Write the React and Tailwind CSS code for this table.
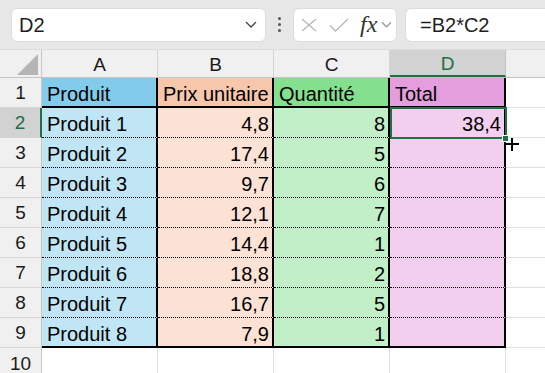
import React from 'react'

const data = [
  ['Produit 1', '4,8', '8', '38,4'],
  ['Produit 2', '17,4', '5', ''],
  ['Produit 3', '9,7', '6', ''],
  ['Produit 4', '12,1', '7', ''],
  ['Produit 5', '14,4', '1', ''],
  ['Produit 6', '18,8', '2', ''],
  ['Produit 7', '16,7', '5', ''],
  ['Produit 8', '7,9', '1', ''],
]

const heads = ['Produit', 'Prix unitaire', 'Quantité', 'Total']
const headBg = ['bg-[#83cbeb]', 'bg-[#f7c7ac]', 'bg-[#84e08e]', 'bg-[#e49edd]']
const cellBg = ['bg-[#c0e6f5]', 'bg-[#fbe2d5]', 'bg-[#c1f0c8]', 'bg-[#f2cfee]']

function Chevron({ className }) {
  return (
    <svg className={className} width="12" height="7" viewBox="0 0 12 7" fill="none">
      <path d="M1 1l5 5 5-5" stroke="currentColor" strokeWidth="1.3" />
    </svg>
  )
}

function RowHead({ n, active }) {
  return (
    <div className={`w-[42px] shrink-0 h-[30px] flex items-center justify-center pt-[2px] text-[19px] border-b border-[#d6d6d6] ${active ? 'bg-[#d2d2d2] text-[#1e6e42] border-r-2 border-r-[#1e7145]' : 'bg-[#f0f0f0] text-[#1a1a1a] border-r border-r-[#c6c6c6]'}`}>
      {n}
    </div>
  )
}

export default function App() {
  return (
    <div className="w-[545px] h-[373px] overflow-hidden bg-white text-black" style={{ fontFamily: '"Liberation Sans", Arial, sans-serif' }}>
      {/* formula bar */}
      <div className="h-[49px] bg-[#e7e7e7] flex items-center pl-[11px] gap-0">
        <div className="w-[255px] h-[34px] bg-white rounded-[6px] border border-[#dcdcdc] flex items-center pl-[7px] pr-[8px]">
          <span className="text-[20px] text-[#1f1f1f] flex-1">D2</span>
          <Chevron className="text-[#444]" />
        </div>
        <div className="w-[27px] flex flex-col items-center gap-[3px]">
          <span className="w-[3px] h-[3px] bg-[#555] rounded-full" />
          <span className="w-[3px] h-[3px] bg-[#555] rounded-full" />
          <span className="w-[3px] h-[3px] bg-[#555] rounded-full" />
        </div>
        <div className="w-[104px] h-[34px] bg-white rounded-[6px] border border-[#dcdcdc] flex items-center pl-[7px]">
          <svg width="16" height="14" viewBox="0 0 16 14" fill="none">
            <path d="M1 1l14 12M15 1L1 13" stroke="#b8b8b8" strokeWidth="1.4" />
          </svg>
          <svg className="ml-[12px]" width="20" height="14" viewBox="0 0 20 14" fill="none">
            <path d="M1 7.5l5.5 5.5L19 1" stroke="#b8b8b8" strokeWidth="1.4" />
          </svg>
          <span className="ml-[11px] text-[24px] italic text-[#333] leading-none -mt-[2px]" style={{ fontFamily: '"Liberation Serif", "Times New Roman", serif' }}>fx</span>
          <Chevron className="ml-[4px] text-[#999] w-[11px]" />
        </div>
        <div className="ml-[8px] flex-1 h-[34px] bg-white rounded-l-[6px] border border-r-0 border-[#dcdcdc] flex items-center pl-[14px]">
          <span className="text-[20px] text-[#1f1f1f]">=B2*C2</span>
        </div>
      </div>

      {/* column headers */}
      <div className="flex h-[29px] bg-[#f0f0f0] border-t border-[#dedede] border-b border-b-[#c4c4c4]">
        <div className="w-[42px] shrink-0 border-r border-[#c6c6c6] relative">
          <svg className="absolute left-[17px] top-[4px]" width="22" height="22" viewBox="0 0 22 22">
            <path d="M21 0V21H0z" fill="#b5b5b5" />
          </svg>
        </div>
        {['A', 'B', 'C'].map(l => (
          <div key={l} className="w-[116px] shrink-0 border-r border-[#d4d4d4] flex items-center justify-center pt-[3px] text-[19px] text-[#1a1a1a]">{l}</div>
        ))}
        <div className="w-[116px] shrink-0 bg-[#d2d2d2] border-r border-[#c4c4c4] border-b-2 border-b-[#1e7145] flex items-center justify-center pt-[4px] text-[19px] text-[#1e6e42]">D</div>
        <div className="flex-1" />
      </div>

      {/* row 1 */}
      <div className="flex">
        <RowHead n={1} />
        {heads.map((h, i) => (
          <div key={h} className={`w-[116px] shrink-0 h-[30px] ${headBg[i]} border-r-2 border-b-2 border-black pl-[5px] pt-[2px] text-[20px] leading-[28px]`}>{h}</div>
        ))}
        <div className="flex-1 h-[30px] border-b border-[#e0e0e0]" />
      </div>

      {/* data rows */}
      {data.map((r, ri) => {
        const last = ri === data.length - 1
        const bottom = last ? 'border-b-2 border-b-black' : 'border-b border-b-black [border-bottom-style:dotted]'
        return (
          <div key={ri} className="flex">
            <RowHead n={ri + 2} active={ri === 0} />
            {r.map((v, ci) => (
              <div key={ci} className={`relative w-[116px] shrink-0 h-[30px] ${cellBg[ci]} border-r-2 border-r-black ${bottom} pt-[2px] text-[20px] leading-[28px] ${ci === 0 ? 'pl-[5px]' : 'text-right pr-[3px]'}`}>
                {v}
                {ri === 0 && ci === 3 && (
                  <>
                    <div className="absolute left-0 -top-[1px] -right-[3px] -bottom-[2px] border-2 border-[#1e7145] z-10" />
                    <div className="absolute -right-[5px] -bottom-[5px] w-[7px] h-[7px] bg-[#1e7145] border border-white z-20" />
                    <div className="absolute -right-[15px] -bottom-[14px] w-[13px] h-[13px] z-30">
                      <div className="absolute left-[5px] top-0 w-[2px] h-[13px] bg-black" />
                      <div className="absolute left-0 top-[5px] w-[13px] h-[2px] bg-black" />
                    </div>
                  </>
                )}
              </div>
            ))}
            <div className="flex-1 h-[30px] border-b border-[#e0e0e0]" />
          </div>
        )
      })}

      {/* row 10 */}
      <div className="flex">
        <div className="w-[42px] shrink-0 h-[30px] bg-[#f0f0f0] border-r border-[#c6c6c6] flex items-center justify-center pt-[2px] text-[19px] text-[#1a1a1a]">10</div>
        {[0, 1, 2, 3].map(i => (
          <div key={i} className="w-[116px] shrink-0 h-[30px] border-r border-[#e0e0e0]" />
        ))}
      </div>
    </div>
  )
}
